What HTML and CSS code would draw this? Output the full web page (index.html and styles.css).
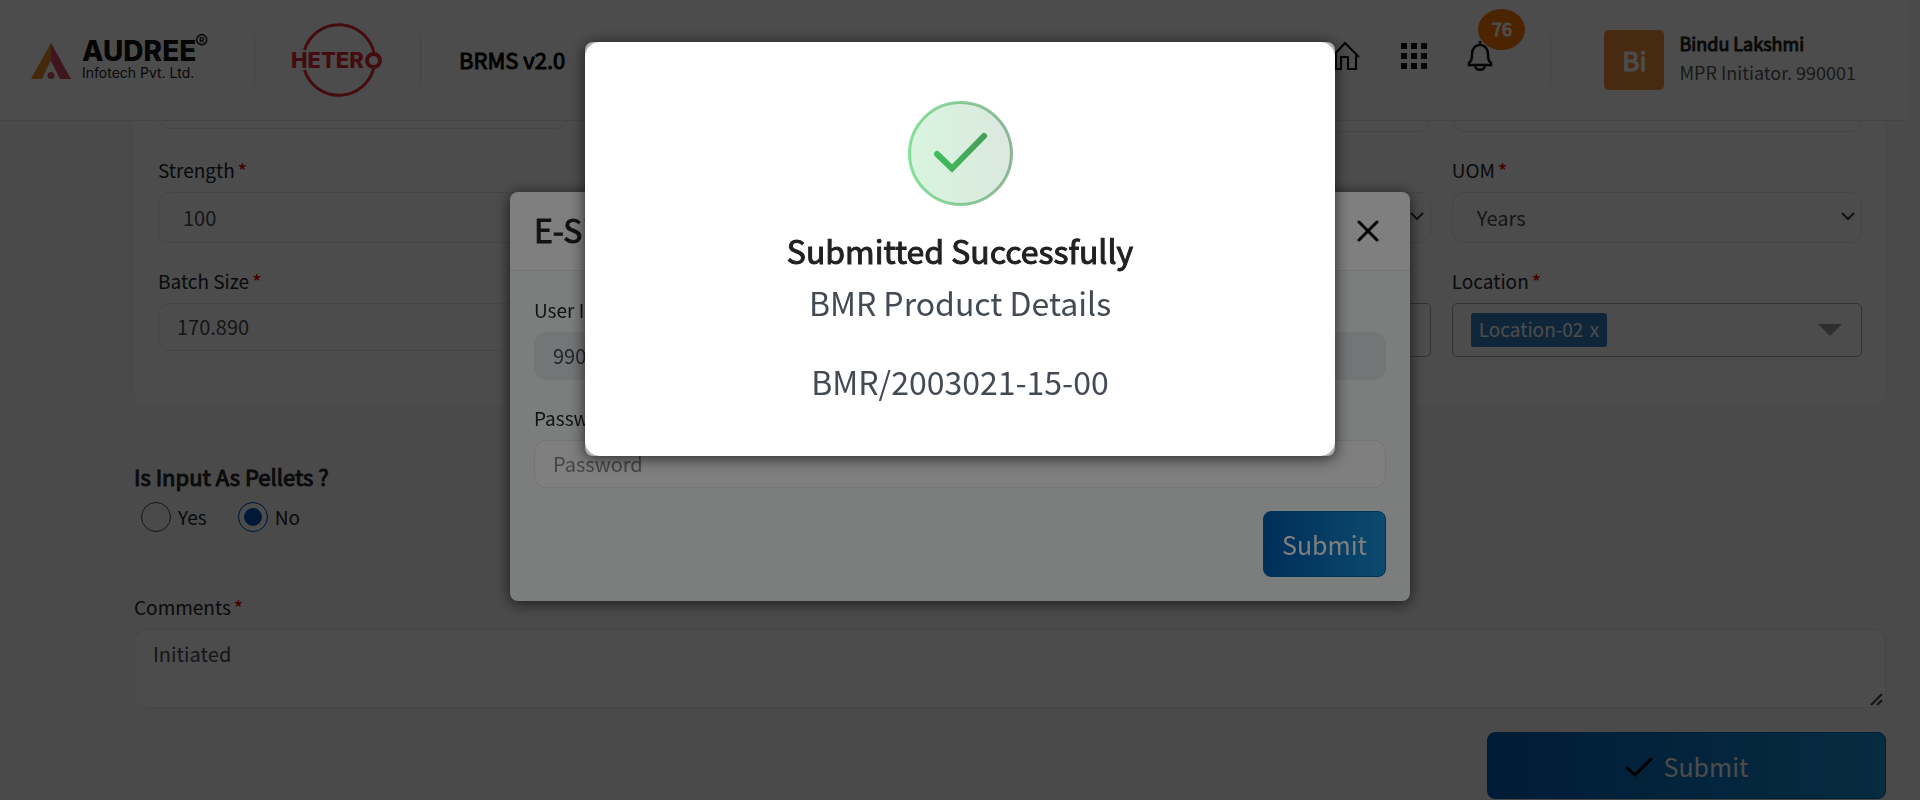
FILE: index.html
```html
<!DOCTYPE html>
<html lang="en">
<head>
<meta charset="utf-8">
<title>BRMS v2.0</title>
<link rel="stylesheet" href="styles.css">
</head>
<body>
<header class="topbar">
  <div class="brand">
    <svg class="brand-mark" viewBox="0 0 40 36" aria-hidden="true"><path fill="#e8892a" d="M20 0v17L11 36H0z"/><path fill="#cf4a63" d="M20 0l20 36H29L20 18z"/><circle cx="20" cy="32.500" r="3.500" fill="#cf4a63"/></svg>
    <div class="brand-text"><strong class="brand-name">AUDREE</strong><span class="brand-sub">Infotech Pvt. Ltd.</span></div>
    <span class="brand-reg">®</span>
  </div>
  <span class="divider"></span>
  <svg class="hetero" viewBox="0 0 92 76" role="img" aria-label="Hetero"><g fill="none" stroke="#e02a35"><path stroke-width="3" d="M12.500 28A36 36 0 0 1 82 31M12.500 48A36 36 0 0 0 82 45"/><circle cx="81.500" cy="38.500" r="6.500" stroke-width="4"/></g><text class="hetero-text" x="-1" y="46" fill="#e02a35">HETER</text></svg>
  <span class="divider"></span>
  <h1 class="app-name">BRMS v2.0</h1>
  <nav class="actions">
    <a href="#" aria-label="Home"><svg width="30" height="30" viewBox="0 0 30 30" fill="none" stroke="#000" stroke-width="2"><path d="M1 16L14 2l14 14M5 13v15h5V16h7v12h8V13"/></svg></a>
    <a href="#" aria-label="Apps"><svg width="26" height="26" viewBox="0 0 26 26" fill="#111"><path d="M0 0h6v6H0zM10 0h6v6h-6zM20 0h6v6h-6zM0 10h6v6H0zM10 10h6v6h-6zM20 10h6v6h-6zM0 20h6v6H0zM10 20h6v6h-6zM20 20h6v6h-6z"/></svg></a>
    <a href="#" class="bell" aria-label="Notifications"><svg width="26" height="30" viewBox="0 0 26 30" fill="none" stroke="#111" stroke-width="2.500"><path d="M13 0v4M13 4c-5 0-8 4-8 9 0 6-1 7-3 9v2h22v-2c-2-2-3-3-3-9 0-5-3-9-8-9z"/><path d="M8 25c1 5 9 5 10 0"/></svg><span class="badge">76</span></a>
  </nav>
  <span class="divider"></span>
  <div class="user">
    <span class="avatar">Bi</span>
    <div class="user-text"><strong>Bindu Lakshmi</strong><span>MPR Initiator. 990001</span></div>
  </div>
</header>

<main class="page">
  <form class="form">
    <section class="card">
      <div class="field"><input class="control" aria-label="Product"></div>
      <div class="field"><input class="control" aria-label="Code"></div>
      <div class="field"><input class="control tall" aria-label="Stage"></div>
      <div class="field"><input class="control tall" aria-label="Type"></div>

      <div class="field"><label for="strength">Strength<b>*</b></label><input id="strength" class="control tall" value="100"></div>
      <div class="field"><input class="control tall" aria-label="Unit"></div>
      <div class="field"><div class="select"><select class="control tall" aria-label="Shelf life"><option></option></select><svg viewBox="0 0 14 9"><path d="M1 1l6 6 6-6"/></svg></div></div>
      <div class="field"><label for="uom">UOM<b>*</b></label><div class="select"><select id="uom" class="control tall"><option>Years</option></select><svg viewBox="0 0 14 9"><path d="M1 1l6 6 6-6"/></svg></div></div>

      <div class="field"><label for="batch">Batch Size<b>*</b></label><input id="batch" class="control" value="170.890"></div>
      <div class="field"><input class="control" aria-label="Market"></div>
      <div class="field"><button type="button" class="multi" aria-label="Block"></button></div>
      <div class="field"><label for="location">Location<b>*</b></label><button id="location" type="button" class="multi"><span class="chip">Location-02 <span>x</span></span><i class="caret"></i></button></div>
    </section>

    <fieldset class="pellets">
      <legend>Is Input As Pellets ?</legend>
      <div class="radios">
        <label><input type="radio" name="pellets">Yes</label>
        <label><input type="radio" name="pellets" checked>No</label>
      </div>
    </fieldset>

    <div class="field"><label for="comments">Comments<b>*</b></label><div class="area-wrap"><textarea id="comments" class="control area">Initiated</textarea><svg class="grip" viewBox="0 0 13 13" aria-hidden="true"><path d="M1 12L12 1M7 12l5-5"/></svg></div></div>
    <button type="button" class="btn btn-main"><svg width="28" height="24" viewBox="0 0 28 24" fill="none" stroke="#000" stroke-width="3"><path d="M1 13l9 8L27 4"/></svg>Submit</button>
  </form>
</main>

<div class="overlay overlay-sign">
  <section class="sign" role="dialog" aria-labelledby="sign-title">
    <div class="sign-head"><h2 id="sign-title">E-Signature</h2><button type="button" class="close" aria-label="Close"><svg width="22" height="22" viewBox="0 0 22 22" fill="none" stroke="#000" stroke-width="3" stroke-linecap="round"><path d="M2 2l18 18M20 2L2 20"/></svg></button></div>
    <form class="sign-body">
      <div class="field"><label for="uid">User ID</label><input id="uid" class="control" value="990001" disabled></div>
      <div class="field"><label for="pwd">Password</label><input id="pwd" class="control" type="password" placeholder="Password"></div>
      <button type="button" class="btn">Submit</button>
    </form>
  </section>
</div>

<div class="overlay overlay-done">
  <section class="done" role="alertdialog" aria-labelledby="done-title">
    <div class="done-body">
      <svg class="tick" viewBox="0 0 105 105" aria-hidden="true"><defs><linearGradient id="g" gradientUnits="userSpaceOnUse" x1="0" x2="105" y1="0" y2="0"><stop offset="0" stop-color="#3cce5c"/><stop offset="1" stop-color="#4c8c5a"/></linearGradient></defs><circle cx="52.500" cy="52.500" r="51" fill="url(#g)" fill-opacity=".2" stroke="url(#g)" stroke-opacity=".6" stroke-width="3"/><path d="M29 53l15 14.500L76 35" fill="none" stroke="url(#g)" stroke-width="6" stroke-linecap="round"/></svg>
      <h2 id="done-title">Submitted Successfully</h2>
      <p>BMR Product Details</p>
      <p class="number">BMR/2003021-15-00</p>
    </div>
  </section>
</div>
</body>
</html>
```
FILE: styles.css
```css
* { box-sizing: border-box; }
body {
  margin: 0;
  height: 100vh;
  overflow: hidden;
  background: #f8f8f8;
  color: #212529;
  font: 19px/30px "Noto Sans CJK SC", "Noto Sans", sans-serif;
}
h1, h2, p { margin: 0; }
input, select, textarea, button { font: inherit; color: inherit; }

/* Emboldened regular face, used for titles and header text */
.app-name, .badge, .avatar, .user-text strong, .user-text span, .pellets legend, .sign-head h2, .done-body h2 {
  font-weight: 400;
  -webkit-text-stroke: 1px currentColor;
}
.user-text span { -webkit-text-stroke-width: 0; }

.topbar {
  position: relative;
  z-index: 1;
  display: flex;
  align-items: center;
  height: 121px;
  margin-right: 12px;
  padding: 0 52px 0 31px;
  background: #fff;
  border-bottom: 1px solid #e8e8e8;
}
.brand { display: flex; align-items: flex-start; width: 223px; }
.brand-mark { width: 40px; height: 36px; margin: 6px 11px 0 0; }
.brand-text { display: flex; flex-direction: column; width: 113px; padding-top: 2px; }
.brand-name { font: 800 28px/24px Inter, sans-serif; color: #111; }
.brand-sub { font: 14px/20px Inter, sans-serif; color: #222; white-space: nowrap; }
.brand-reg { font: 20px/10px Inter, sans-serif; color: #111; }
.divider { width: 1px; height: 52px; background: #e4e4e4; }
.hetero { width: 92px; height: 76px; margin: 0 36px 0 37px; overflow: visible; }
.hetero-text { font: 800 22px Inter, sans-serif; }
.app-name { margin-left: 38px; padding-bottom: 3px; font-size: 22px; color: #000; }
.actions { display: flex; align-items: center; gap: 40px; margin: 0 57px 0 auto; height: 52px; padding-bottom: 8px; }
.actions a { display: flex; position: relative; color: #fff; text-decoration: none; }
.badge {
  position: absolute;
  left: 11px;
  bottom: 21px;
  width: 47px;
  height: 41px;
  border-radius: 50%;
  background: #ff7a00;
  font-size: 18px;
  line-height: 38px;
  text-align: center;
}
.user { display: flex; align-items: center; gap: 15px; margin-left: 53px; }
.avatar { width: 60px; height: 60px; border-radius: 5px; background: #f28c38; color: #fff; font-size: 26px; line-height: 60px; text-align: center; }
.user-text { display: flex; flex-direction: column; padding-bottom: 4px; font-size: 18px; line-height: 29px; color: #555; }
.user-text strong { color: #222; }

.page { padding: 0 34px 0 134px; margin-top: -40px; }
.form { display: flex; flex-direction: column; }
.card {
  display: grid;
  grid-template-columns: repeat(4, 1fr);
  gap: 23px 21px;
  padding: 0 24px 48px;
  background: #fefefe;
  border-radius: 0 0 12px 12px;
}
.field { display: flex; flex-direction: column; justify-content: flex-end; gap: 7px; min-width: 0; }
.card .field:nth-child(-n+4) { justify-content: flex-start; }
.card .field:nth-child(n+9) { justify-content: flex-start; }
.card .field:nth-child(n+9) > :only-child { margin-top: 37px; }
.field b { margin-left: 3px; font-weight: 500; color: #e00; }
.control {
  width: 100%;
  height: 48px;
  padding: 0 18px 2px;
  border: 1px solid #e8e8e8;
  border-radius: 12px;
  background: #fff;
  color: #444b55;
  font-size: 20px;
  outline: 0;
}
.tall { height: 51px; padding: 0 24px; }
.control::placeholder { color: #868b90; }
.control:disabled { background: #e8eaef; border-color: #e8eaef; }
.select { position: relative; }
.select select { appearance: none; display: block; }
.select svg { position: absolute; right: 7px; top: 20px; width: 14px; height: 9px; fill: none; stroke: #343a40; stroke-width: 2; }
.multi {
  display: flex;
  align-items: center;
  justify-content: space-between;
  height: 54px;
  padding: 0 19px 0 18px;
  border: 1px solid #aaa;
  border-radius: 5px;
  background: #fff;
}
.chip { padding: 1px 8px 3px; border-radius: 3px; background: #337fc2; color: #fff; }
.chip span { margin-left: 2px; }
.caret { border: 12px solid transparent; border-top-color: #999; border-bottom: 0; }

.pellets { margin: 53px 0 60px; padding: 0; border: 0; }
.pellets legend { padding: 0; font-size: 22px; line-height: 36px; }
.radios { display: flex; gap: 31px; margin: 8px 0 0 7px; }
.radios label { display: flex; align-items: center; gap: 7px; }
.radios input {
  appearance: none;
  width: 30px;
  height: 30px;
  margin: 0;
  border: 1px solid #444;
  border-radius: 50%;
}
.radios input:checked { border: 1px solid #0a62c4; background: #0055b8; box-shadow: inset 0 0 0 5px #fff; }
.area-wrap { position: relative; }
.area { display: block; height: 79px; padding: 9px 18px; resize: none; }
.grip { position: absolute; right: 3px; bottom: 2px; width: 13px; height: 13px; fill: none; stroke: #444; stroke-width: 2; }
.btn {
  display: flex;
  align-items: center;
  justify-content: center;
  height: 66px;
  padding: 0 18px;
  border: 1px solid #0062b4;
  border-radius: 8px;
  background: linear-gradient(90deg, #005eb4, #1894dc);
  color: #fff;
  font-size: 25px;
}
.btn-main { align-self: flex-end; width: 399px; height: 67px; margin-top: 24px; gap: 11px; }

.overlay { position: fixed; inset: 0; display: flex; align-items: flex-start; justify-content: center; }
.overlay-sign { z-index: 2; padding-top: 192px; background: rgba(0, 0, 0, .4); }
.overlay-done { z-index: 3; padding-top: 42px; background: rgba(0, 0, 0, .5); }
.sign { width: 900px; border-radius: 8px; background: #fff; box-shadow: 0 2px 15px rgba(0, 0, 0, .7); }
.sign-head { display: flex; align-items: center; justify-content: space-between; height: 79px; padding: 0 31px 0 24px; border-bottom: 1px solid #e8ebe9; }
.sign-head h2 { padding-bottom: 4px; font-size: 32px; }
.close { display: flex; padding: 0; border: 0; background: none; }
.sign-body { display: flex; flex-direction: column; gap: 23px; padding: 24px; border-radius: 0 0 12px 12px; background: #f7fcf8; }
.sign-body .btn { align-self: flex-end; }
.done { width: 750px; border-radius: 8px; background: #b0b0b0; box-shadow: 0 2px 15px rgba(0, 0, 0, .7); }
.done-body { display: flex; flex-direction: column; align-items: center; padding: 59px 24px 49px; border-radius: 15px; background: #fff; font-size: 32px; line-height: 52px; color: #434a54; }
.tick { width: 105px; height: 105px; margin-bottom: 18px; }
.done-body h2 { font-size: 32px; color: #212121; }
.number { margin-top: 27px; }
```
